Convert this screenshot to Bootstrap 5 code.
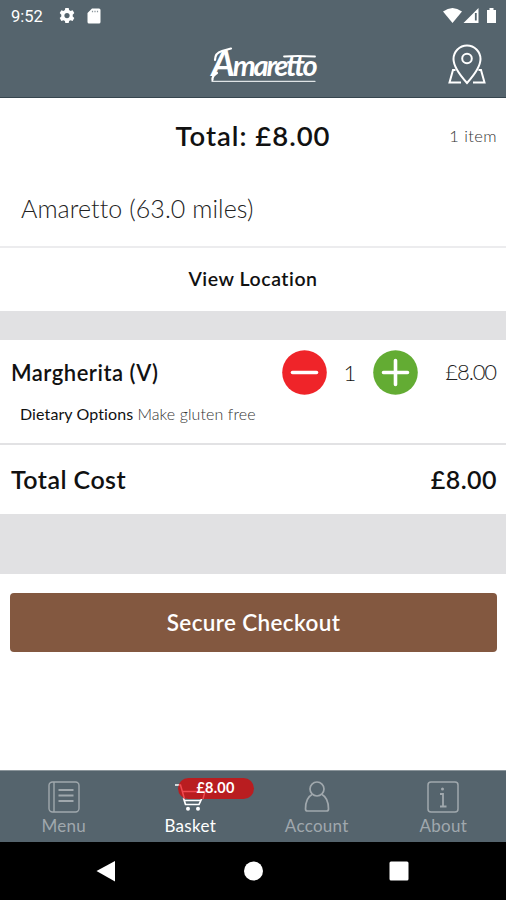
<!DOCTYPE html>
<html lang="en">
<head>
<meta charset="utf-8">
<meta name="viewport" content="width=device-width, initial-scale=1">
<title>Amaretto – Basket</title>
<link href="https://cdn.jsdelivr.net/npm/bootstrap@5.3.0/dist/css/bootstrap.min.css" rel="stylesheet">
<style>
  body { font-family: Lato, "Open Sans", sans-serif; color: #111; line-height: 1; font-variant-ligatures: none; }
  .app { width: 506px; height: 900px; }
  .slate { background: #55646d; }
  .app-head { height: 98px; border-bottom: 1px solid #36454e; }
  .status { height: 32px; padding: 0 8px 0 11px; font: 400 16.5px Roboto, sans-serif; }
  .sd-card { margin-left: 12px; }
  .title-bar { height: 65px; padding: 10px 0 0 21px; }
  .brand-name { font-size: 29px; font-weight: 700; font-style: italic; line-height: 40px; height: 40px; letter-spacing: -2.2px; padding: 0 4px; }
  .brand-name::first-letter { font-size: 36px; }
  .brand-swash { left: 207px; top: 6px; }
  .map-link { right: 20px; top: 12px; }
  .sum-row { height: 75px; }
  .sum-total { font-size: 27.5px; font-weight: 600; letter-spacing: 1px; }
  .count { right: 9px; top: 30px; font-size: 16.5px; font-weight: 300; letter-spacing: .4px; color: #333; }
  .place { height: 75px; padding: 0 20px 2px 21px; font-size: 25px; font-weight: 300; color: #222; border-bottom: 2px solid #ececee; letter-spacing: .08px; }
  .view-loc { height: 63px; padding-bottom: 2px; font-size: 19.5px; font-weight: 600; letter-spacing: .55px; }
  .band { background: #e1e1e3; }
  .band-a { height: 29px; }
  .band-b { height: 60px; }
  .basket-item { height: 105px; padding: 10px 9px 0 11px; border-bottom: 2px solid #e2e2e4; }
  .item-name { font-size: 22px; font-weight: 600; letter-spacing: .5px; }
  .qty { width: 46px; font-size: 22px; font-weight: 300; }
  .price { width: 79px; font-size: 22px; font-weight: 300; color: #222; letter-spacing: -1.1px; padding: 0 1px 2px 0; }
  .opts { padding: 11px 0 0 9px; font-size: 16px; letter-spacing: .1px; }
  .opts .val { font-weight: 300; color: #333; }
  .grand { height: 69px; padding: 0 9px 1px 11px; font-size: 25px; font-weight: 600; letter-spacing: .45px; }
  .pay { margin: 19px 9px 0 10px; height: 59px; border-radius: 4px; background: #835840; color: #fff; font-size: 22.5px; font-weight: 600; letter-spacing: .35px; border: 0; padding-top: 2px; }
  .tabs { height: 72px; border-top: 1px solid #8b959b; }
  .tab { flex: 1 1 0; padding: 9px 0 0 1px; color: #a0a8ad; font-size: 17px; letter-spacing: .3px; font-weight: 400; }
  .tab.on { color: #fff; }
  .tab svg { height: 34px; margin-bottom: 3px; }
  .amount { left: 51px; top: 7px; width: 76px; height: 21px; border-radius: 11px; background: #b91d20; color: #fff; font-size: 14.5px; font-weight: 700; letter-spacing: .2px; z-index: 0; }
  .sysnav { height: 58px; background: #000; }
</style>
</head>
<body>
<div class="app d-flex flex-column bg-white overflow-hidden">
  <header class="app-head slate text-white">
    <div class="status d-flex align-items-center">
      <span>9:52</span>
      <svg class="ms-3" width="16" height="18" viewBox="0 0 16 18"><path fill="#fff" d="M6.300 1h3.400l.400 2.100 1.400.800 2.100-.700 1.700 2.900L13.700 7.700v1.800l1.600 1.500-1.700 2.900-2.100-.700-1.400.800-.400 2.100H6.300l-.400-2.100-1.400-.800-2.100.700L.700 11l1.600-1.500V7.700L.700 6.100l1.700-2.900 2.100.700 1.400-.800z"/><circle cx="8" cy="8.600" r="2.600" fill="#55646d"/></svg>
      <svg class="sd-card" width="14" height="16" viewBox="0 0 14 16"><path d="M5 .5h7q1.500 0 1.500 1.500v12q0 1.500-1.500 1.500H2Q.5 15.500.5 14V5z" fill="#fff"/><path d="M5.500 2.800v1.500M8 2.800v1.500M10.500 2.800v1.500" stroke="#8b969c" stroke-width="1.200"/></svg>
      <svg class="ms-auto" width="56" height="18" viewBox="0 0 56 18"><path d="M1 4.500Q10.500-2.500 20 4.500L10.500 16z" fill="#fff"/><path d="M36.500 1v15H21.500z" fill="#fff"/><path d="M33.800 6v7.500" stroke="#55646d" stroke-width="1.800"/><path d="M45 3h2.500V1h4v2H54v13h-9z" fill="#fff"/></svg>
    </div>
    <div class="title-bar position-relative d-flex justify-content-center align-items-start">
      <div class="brand-name">Amaretto</div>
      <svg class="brand-swash position-absolute" width="116" height="48" viewBox="0 0 116 48" fill="none" stroke="#fff" stroke-linecap="round"><path d="M5 43.300H108" stroke="#dfe4e6" stroke-width="1.300"/><path d="M8 22Q8 15 15 13L24 10.500M5.500 42Q5 38 10 35" stroke-width="2.200"/><path d="M77 18.500Q90 17.500 108 18.500" stroke-width="1.800"/></svg>
      <svg class="map-link position-absolute" width="38" height="42" viewBox="0 0 38 42" fill="none" stroke="#fff" stroke-width="2"><path d="M19 39Q5.500 24 5.500 15A13.500 13.500 0 0 1 32.500 15Q32.500 24 19 39z"/><circle cx="19" cy="14.500" r="4.800"/><path d="M7.500 26H5L1.500 38.500H13M30.500 26H33l3.500 12.500H25"/></svg>
    </div>
  </header>

  <main class="flex-grow-1 d-flex flex-column">
    <div class="sum-row position-relative d-flex align-items-center justify-content-center">
      <span class="sum-total">Total: £8.00</span>
      <span class="count position-absolute">1 item</span>
    </div>
    <div class="place d-flex align-items-center">Amaretto (63.0 miles)</div>
    <div class="view-loc d-flex align-items-center justify-content-center">View Location</div>
    <div class="band band-a"></div>
    <div class="basket-item">
      <div class="d-flex align-items-center">
        <span class="item-name me-auto">Margherita (V)</span>
        <svg width="45" height="45" viewBox="0 0 45 45"><circle cx="22.500" cy="22.500" r="22.300" fill="#ef2429"/><path d="M10.500 22.500h24" stroke="#fff" stroke-width="3.600" stroke-linecap="round"/></svg>
        <span class="qty text-center">1</span>
        <svg width="45" height="45" viewBox="0 0 45 45"><circle cx="22.500" cy="22.500" r="22.300" fill="#63ac33"/><path d="M10.500 22.500h24M22.500 10.500v24" stroke="#fff" stroke-width="3.600" stroke-linecap="round"/></svg>
        <span class="price text-end">£8.00</span>
      </div>
      <div class="opts"><span>Dietary Options</span> <span class="val">Make gluten free</span></div>
    </div>
    <div class="grand d-flex align-items-center justify-content-between"><span>Total Cost</span><span>£8.00</span></div>
    <div class="band band-b"></div>
    <button type="button" class="pay">Secure Checkout</button>
  </main>

  <nav class="tabs slate d-flex">
    <div class="tab d-flex flex-column align-items-center">
      <svg width="34" viewBox="0 0 34 34" fill="none" stroke="currentColor" stroke-width="1.400"><rect x="2" y="2" width="30" height="30" rx="3.500"/><path d="M7 2v30"/><path d="M11.500 10H26.500M11.500 15.500H26.500M11.500 21H26.500" stroke-width="1.800"/></svg>
      <span>Menu</span>
    </div>
    <div class="tab on position-relative d-flex flex-column align-items-center">
      <svg width="34" viewBox="0 0 34 34" fill="none" stroke="#fff" stroke-width="1.700"><path d="M2 5h4.500l1.200 2M10.500 18l2 6.500h13.500l3-6.500M11.500 20.500h16"/><circle cx="15" cy="28.800" r="2" fill="#fff" stroke="none"/><circle cx="25" cy="28.800" r="2" fill="#fff" stroke="none"/></svg>
      <span>Basket</span>
      <div class="amount position-absolute d-flex align-items-center justify-content-center">
        <svg class="position-absolute top-0 start-0" width="34" viewBox="0 0 34 34" fill="none" stroke="#f04a50" stroke-width="1.500"><path d="M1 7h1.500l4 14M4.500 13.500H27L25 21"/></svg>
        <span class="position-relative">£8.00</span>
      </div>
    </div>
    <div class="tab d-flex flex-column align-items-center">
      <svg width="34" viewBox="0 0 34 34" fill="none" stroke="currentColor" stroke-width="1.700"><circle cx="17" cy="9" r="7"/><path d="M12 14.500Q5.500 18 5.500 29q0 2 2 2h19q2 0 2-2Q28.500 18 22 14.500"/></svg>
      <span>Account</span>
    </div>
    <div class="tab d-flex flex-column align-items-center">
      <svg width="34" viewBox="0 0 34 34" fill="none" stroke="currentColor" stroke-width="1.500"><rect x="2" y="2" width="30" height="30" rx="3"/><path d="M14 14h3v12M14 26.500h6.500" stroke-width="1.800"/><circle cx="16.500" cy="9" r="1.500" fill="currentColor" stroke="none"/></svg>
      <span>About</span>
    </div>
  </nav>
  <div class="sysnav">
    <svg class="d-block" width="506" height="58" viewBox="0 0 506 58"><g fill="#fff"><path d="M96.500 29L115 19v20.500z"/><circle cx="253.500" cy="29" r="9.500"/><rect x="389.500" y="19.500" width="19" height="19" rx="1.500"/></g></svg>
  </div>
</div>
<script src="https://cdn.jsdelivr.net/npm/bootstrap@5.3.0/dist/js/bootstrap.bundle.min.js"></script>
</body>
</html>
